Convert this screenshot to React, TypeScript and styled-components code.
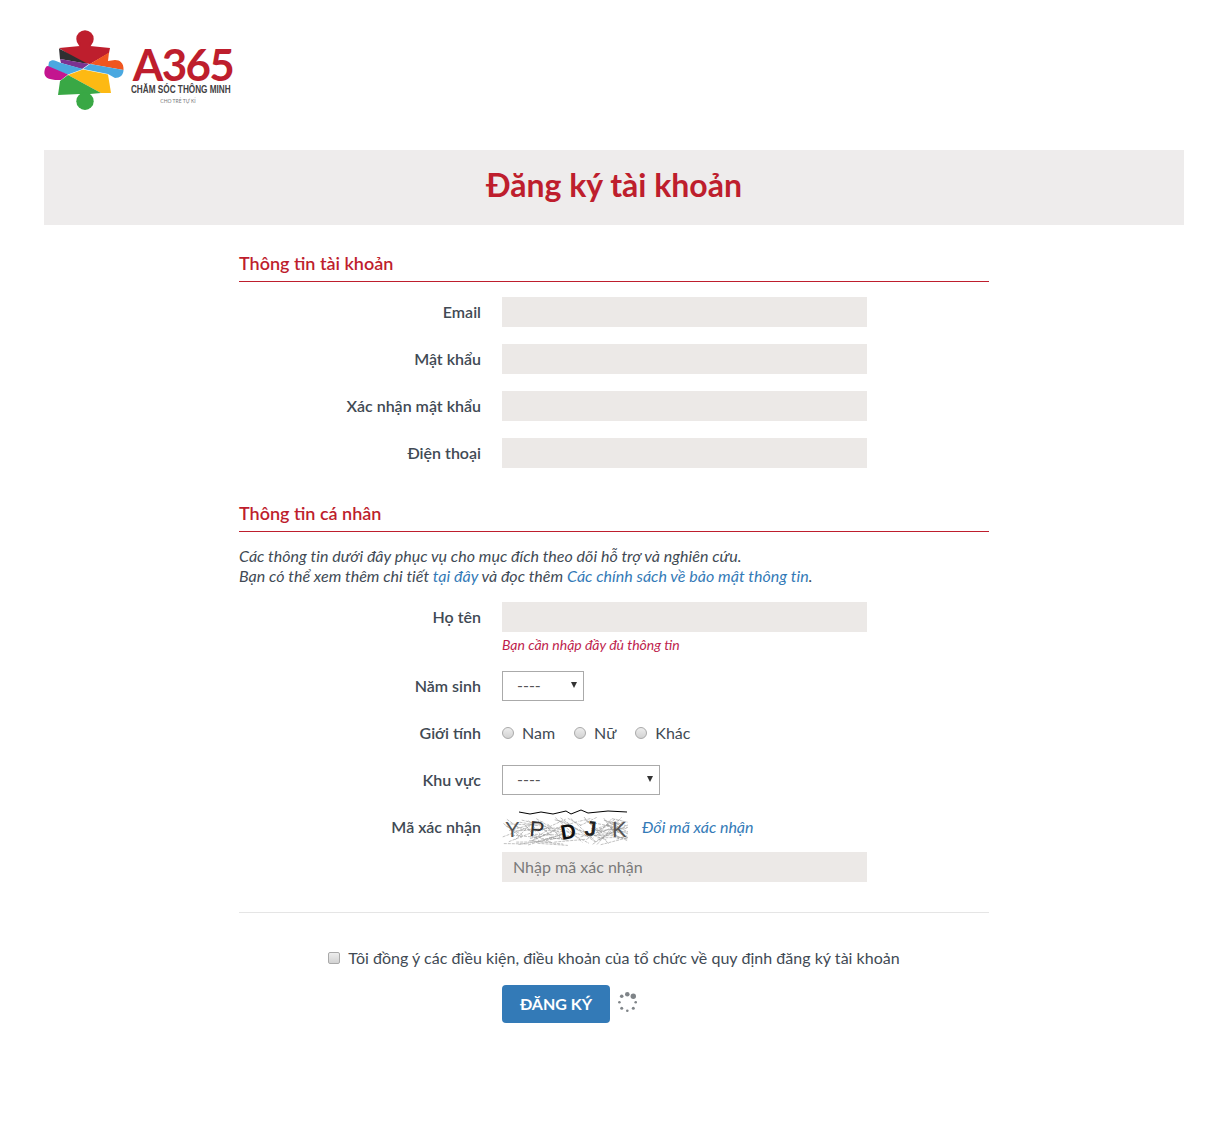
import React from "react";
import styled, { createGlobalStyle } from "styled-components";

const Global = createGlobalStyle`
    html, body {
        margin: 0;
        padding: 0;
        background: #fff;
    }
    body {
        font-family: Lato, "Noto Sans", sans-serif;
        font-size: 16px;
        line-height: 20px;
        color: #414a54;
    }
    * {
        box-sizing: border-box;
    }
`;

const Page = styled.div`
    min-height: 1143px;
`;

const LogoBar = styled.header`
    display: flex;
    align-items: flex-start;
    gap: 6px;
    height: 150px;
    padding: 30px 44px 0;
`;

const Brand = styled.div`
    display: flex;
    flex-direction: column;
    align-items: center;
    width: 102px;
    margin-top: 16px;
`;

const BrandName = styled.div`
    margin-left: 4px;
    font-size: 44px;
    line-height: 36px;
    font-weight: 700;
    color: #be1e2d;
    letter-spacing: -1.7px;
`;

const BrandTag = styled.div`
    margin-top: 2px;
    font-family: "Liberation Sans", sans-serif;
    font-size: 10px;
    line-height: 12px;
    font-weight: 700;
    color: #414042;
    white-space: nowrap;
    transform: scaleX(0.82);
`;

const BrandSub = styled.div`
    margin-top: 1px;
    margin-left: -6px;
    font-size: 5px;
    line-height: 8px;
    color: #77787b;
    white-space: nowrap;
`;

const Banner = styled.div`
    display: flex;
    align-items: center;
    justify-content: center;
    height: 75px;
    margin: 0 44px;
    padding-bottom: 6px;
    background: #eeecec;
`;

const Title = styled.h1`
    margin: 0;
    font-size: 32px;
    line-height: 40px;
    font-weight: 700;
    color: #be1e2d;
`;

const Form = styled.form`
    width: 750px;
    margin: 0 auto;
`;

const SectionTitle = styled.h2<{ $top: number; $bottom: number }>`
    margin: ${(p) => p.$top}px 0 ${(p) => p.$bottom}px;
    height: 32px;
    padding: 1px 0 6px;
    border-bottom: 1px solid #be1e2d;
    font-size: 18px;
    line-height: 24px;
    font-weight: 600;
    color: #be1e2d;
`;

const Row = styled.div`
    display: grid;
    grid-template-columns: 243px 365px;
    column-gap: 20px;
    margin-bottom: 17px;
`;

const Label = styled.label`
    padding-right: 1px;
    text-align: right;
    font-weight: 600;
    line-height: 30px;
`;

const Field = styled.div`
    display: flex;
    flex-direction: column;
    align-items: flex-start;
`;

const TextInput = styled.input`
    display: block;
    width: 365px;
    height: 30px;
    padding: 0 11px 2px;
    border: 0;
    outline: 0;
    background: #ece9e7;
    font: inherit;
    color: #414a54;

    &::placeholder {
        color: #7a7a7a;
        opacity: 1;
    }
`;

const Note = styled.p`
    margin: 0 0 16px;
    font-size: 16px;
    line-height: 20px;
    font-style: italic;
    letter-spacing: 0.03px;
`;

const Link = styled.a`
    color: #337ab7;
    text-decoration: none;
`;

const ErrorText = styled.div`
    margin-top: 4px;
    height: 18px;
    font-size: 14px;
    line-height: 18px;
    font-style: italic;
    color: #be1e4d;
`;

const SelectBox = styled.div<{ $width: number }>`
    position: relative;
    width: ${(p) => p.$width}px;
    height: 30px;

    &::after {
        content: "";
        position: absolute;
        right: 7px;
        top: 11px;
        border-left: 3px solid transparent;
        border-right: 3px solid transparent;
        border-top: 6px solid #333;
    }
`;

const Select = styled.select`
    width: 100%;
    height: 100%;
    padding: 0 14px 2px;
    border: 1px solid #aaa;
    border-radius: 0;
    background: #fff;
    appearance: none;
    font: inherit;
    color: #555;
`;

const Radios = styled.div`
    display: flex;
    align-items: center;
    height: 30px;
`;

const RadioLabel = styled.label`
    display: flex;
    align-items: center;
    gap: 8px;
    margin-right: 19px;
`;

const Radio = styled.input`
    appearance: none;
    width: 12px;
    height: 12px;
    margin: 0;
    border: 1px solid #a9a9a9;
    border-radius: 50%;
    background: linear-gradient(#ededed, #d2d2d2);
`;

const CaptchaRow = styled.div`
    display: flex;
    align-items: center;
    gap: 14px;
    height: 30px;
    margin-bottom: 10px;
`;

const CaptchaLink = styled(Link)`
    font-style: italic;
`;

const Divider = styled.hr`
    margin: 30px 0 35px;
    border: 0;
    border-top: 1px solid #e5e5e5;
`;

const Agree = styled.label`
    display: flex;
    justify-content: center;
    align-items: center;
    gap: 8px;
    margin-bottom: 17px;
    letter-spacing: 0.03px;
`;

const Checkbox = styled.input`
    appearance: none;
    width: 12px;
    height: 12px;
    margin: 0;
    border: 1px solid #a9a9a9;
    border-radius: 2px;
    background: linear-gradient(#ededed, #d2d2d2);
`;

const Actions = styled.div`
    display: flex;
    align-items: flex-start;
    gap: 8px;
    padding-left: 263px;
`;

const Submit = styled.button`
    width: 108px;
    height: 38px;
    border: 0;
    border-radius: 4px;
    background: #337ab7;
    color: #fff;
    font: inherit;
    font-size: 16px;
    font-weight: 700;
`;

const SpinnerSvg = styled.svg`
    margin-top: 7px;
`;

function PuzzleLogo() {
    return (
        <svg width="80" height="80" viewBox="0 0 80 80">
            <circle cx="41" cy="9" r="8.7" fill="#be1e2d" />
            <path d="M15 18 L36 16 L37 12 H45 L46 16 L66 18 L65 23 L46 34 L36 32 Z" fill="#be1e2d" />
            <path d="M15 18.5 L44 34 L16 29 Z" fill="#2f2f31" />
            <path d="M16 29 L45 34 L38 39 L17 33 Z" fill="#7b3291" />
            <path d="M65 22.5 L64 31 L71 30 C76 30 80 33 79.5 40 L46 34 Z" fill="#f0561f" />
            <path d="M46 34 L79.5 40 C79.5 45 76 48 71 48 L64 44 L39 39 Z" fill="#4aa8e0" />
            <path d="M5 32 C7 30 10 30 12 31 L17 33 L39 39 L24 44.5 L4 38 Z" fill="#4aa8e0" />
            <path d="M4 36 L24 44.5 L17 50 C13 50 9 50 6 49 C1 48 0 44 0.5 41 C1 38 2 36 4 36 Z" fill="#c3158f" />
            <path d="M24 45 L39 39.5 L64 44.5 L67 63 L57 63 Z" fill="#fdb913" />
            <path d="M24 45 L57 63 L46 64 L45 67 H37 L36 64 L14 65 L16 51 Z" fill="#39a845" />
            <circle cx="41" cy="71.2" r="8.7" fill="#39a845" />
        </svg>
    );
}

// speckled web behind the captcha letters, seeded so that it stays the same
const noise: string[] = [];
let seed = 7;
const next = (max: number) => {
    seed = (seed * 1103 + 12345) % 65536;
    return (seed / 65536) * max;
};
for (let i = 0; i < 85; i++) {
    const x1 = next(116);
    const y1 = 8 + next(29);
    noise.push(`M${x1.toFixed(1)} ${y1.toFixed(1)} L${(x1 + 10 + next(26)).toFixed(1)} ${(8 + next(29)).toFixed(1)}`);
}

function Captcha() {
    const glyphs: [string, number, number, number, number, number, string][] = [
        ["Y", 3, 28, 22, 0, 400, "#555"],
        ["P", 27, 27, 22, 5, 400, "#333"],
        ["D", 60, 31, 21, -10, 700, "#111"],
        ["J", 82, 26, 21, 6, 700, "#222"],
        ["K", 110, 28, 22, 0, 400, "#555"],
    ];
    return (
        <svg width="126" height="38" viewBox="0 -1 126 38">
            <path d={noise.join(" ")} fill="none" stroke="#999" strokeWidth="0.6" strokeDasharray="3 1" />
            <path d="M17 3 L28 5 L39 3 L51 5 L64 2 L69 5 L79 1 L86 4 L106 2 L125 3" fill="none" stroke="#000" strokeWidth="1" />
            {glyphs.map(([ch, x, y, size, rot, weight, fill]) => (
                <text
                    key={ch}
                    x={x}
                    y={y}
                    fontFamily="Liberation Sans, sans-serif"
                    fontSize={size}
                    fontWeight={weight}
                    fill={fill}
                    transform={`rotate(${rot} ${x} ${y})`}
                >
                    {ch}
                </text>
            ))}
        </svg>
    );
}

function Spinner() {
    const dots = [
        [9.3, 2.3, 2.3],
        [15.3, 4.3, 2.7],
        [3.7, 4.3, 1.8],
        [1.4, 10.3, 1.3],
        [17.7, 10.3, 1.3],
        [3.7, 16.3, 1.5],
        [15.3, 16.3, 1.5],
        [9.3, 18.7, 1.3],
    ];
    return (
        <SpinnerSvg width="20" height="21" viewBox="0 0 20 21">
            {dots.map(([cx, cy, r], i) => (
                <circle key={i} cx={cx} cy={cy} r={r} fill="#7f8488" />
            ))}
        </SpinnerSvg>
    );
}

export default function App() {
    return (
        <Page>
            <Global />
            <LogoBar>
                <PuzzleLogo />
                <Brand>
                    <BrandName>A365</BrandName>
                    <BrandTag>CHĂM SÓC THÔNG MINH</BrandTag>
                    <BrandSub>CHO TRẺ TỰ KỈ</BrandSub>
                </Brand>
            </LogoBar>
            <Banner>
                <Title>Đăng ký tài khoản</Title>
            </Banner>
            <Form>
                <SectionTitle $top={25} $bottom={15}>Thông tin tài khoản</SectionTitle>
                <Row>
                    <Label>Email</Label>
                    <TextInput />
                </Row>
                <Row>
                    <Label>Mật khẩu</Label>
                    <TextInput type="password" />
                </Row>
                <Row>
                    <Label>Xác nhận mật khẩu</Label>
                    <TextInput type="password" />
                </Row>
                <Row>
                    <Label>Điện thoại</Label>
                    <TextInput />
                </Row>

                <SectionTitle $top={32} $bottom={14}>Thông tin cá nhân</SectionTitle>
                <Note>
                    Các thông tin dưới đây phục vụ cho mục đích theo dõi hỗ trợ và nghiên cứu.
                    <br />
                    Bạn có thể xem thêm chi tiết <Link href="#">tại đây</Link> và đọc thêm{" "}
                    <Link href="#">Các chính sách về bảo mật thông tin</Link>.
                </Note>
                <Row>
                    <Label>Họ tên</Label>
                    <Field>
                        <TextInput />
                        <ErrorText>Bạn cần nhập đầy đủ thông tin</ErrorText>
                    </Field>
                </Row>
                <Row>
                    <Label>Năm sinh</Label>
                    <SelectBox $width={82}>
                        <Select>
                            <option>----</option>
                        </Select>
                    </SelectBox>
                </Row>
                <Row>
                    <Label>Giới tính</Label>
                    <Radios>
                        <RadioLabel>
                            <Radio type="radio" name="gender" />
                            Nam
                        </RadioLabel>
                        <RadioLabel>
                            <Radio type="radio" name="gender" />
                            Nữ
                        </RadioLabel>
                        <RadioLabel>
                            <Radio type="radio" name="gender" />
                            Khác
                        </RadioLabel>
                    </Radios>
                </Row>
                <Row>
                    <Label>Khu vực</Label>
                    <SelectBox $width={158}>
                        <Select>
                            <option>----</option>
                        </Select>
                    </SelectBox>
                </Row>
                <Row>
                    <Label>Mã xác nhận</Label>
                    <Field>
                        <CaptchaRow>
                            <Captcha />
                            <CaptchaLink href="#">Đổi mã xác nhận</CaptchaLink>
                        </CaptchaRow>
                        <TextInput placeholder="Nhập mã xác nhận" />
                    </Field>
                </Row>
                <Divider />
                <Agree>
                    <Checkbox type="checkbox" />
                    Tôi đồng ý các điều kiện, điều khoản của tổ chức về quy định đăng ký tài khoản
                </Agree>
                <Actions>
                    <Submit type="button">ĐĂNG KÝ</Submit>
                    <Spinner />
                </Actions>
            </Form>
        </Page>
    );
}
